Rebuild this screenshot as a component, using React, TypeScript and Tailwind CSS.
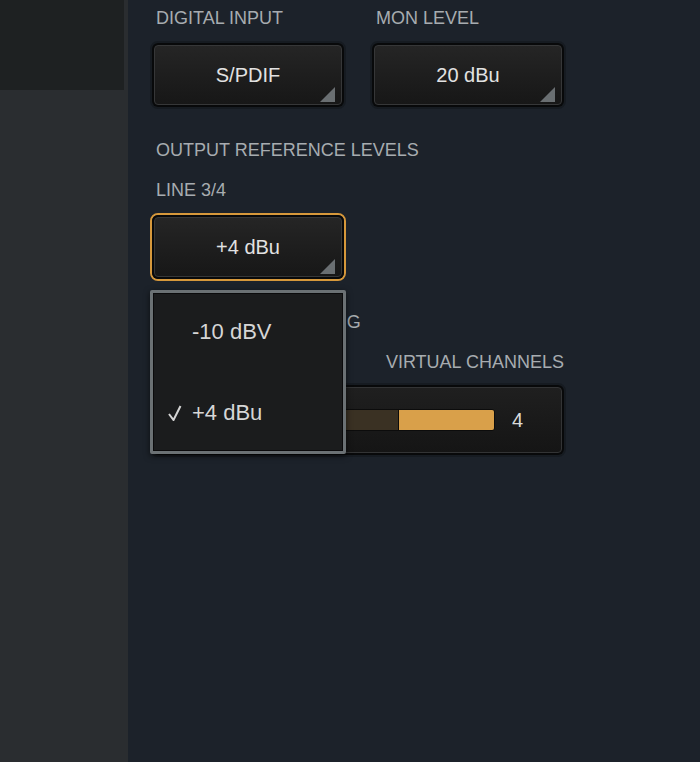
import type { ReactNode } from 'react'

function Label({ children, className = '' }: { children: ReactNode; className?: string }) {
  return (
    <div className={`h-[22px] pl-[6px] text-[18px] leading-[22px] text-[#a7acb0] uppercase whitespace-nowrap ${className}`}>
      {children}
    </div>
  )
}

function SelectButton({ value, focused = false }: { value: string; focused?: boolean }) {
  return (
    <div
      className={`w-[196px] h-[68px] rounded-[8px] border-2 ${
        focused ? 'border-[#d6983b]' : 'border-[#161b21]'
      }`}
    >
      <div className="h-full rounded-[6px] bg-[#08090a] p-[2px]">
        <div className="relative h-full rounded-[4px] border border-[#363738] bg-gradient-to-b from-[#252525] to-[#171717] flex items-center justify-center">
          <span className="text-[20px] text-[#e2e2e2] leading-none">{value}</span>
          <svg className="absolute right-[6px] bottom-[2px]" width="15" height="15" viewBox="0 0 15 15">
            <polygon points="15,0 15,15 0,15" fill="#6a6f72" />
          </svg>
        </div>
      </div>
    </div>
  )
}

function Check() {
  return (
    <svg width="14" height="16" viewBox="0 0 14 16" className="shrink-0">
      <path d="M1 9 L5.5 15 L12.5 1" fill="none" stroke="#d4d4d4" strokeWidth="2" />
    </svg>
  )
}

export default function App() {
  return (
    <div className="flex w-[700px] h-[762px] overflow-hidden" style={{ fontFamily: '"Liberation Sans", Arial, sans-serif' }}>
      <aside className="w-[128px] shrink-0 bg-[#2a2d30]">
        <div className="w-[124px] h-[90px] bg-[#1e2122]" />
      </aside>

      <main className="flex-1 bg-[#1c222a] pl-[22px] pt-[7px]">
        <div className="flex gap-[24px]">
          <div>
            <Label>Digital Input</Label>
            <div className="mt-[12px]">
              <SelectButton value="S/PDIF" />
            </div>
          </div>
          <div>
            <Label>Mon Level</Label>
            <div className="mt-[12px]">
              <SelectButton value="20 dBu" />
            </div>
          </div>
        </div>

        <Label className="mt-[30px]">Output Reference Levels</Label>
        <Label className="mt-[18px]">Line 3/4</Label>

        <div className="relative mt-[12px] w-[196px] z-10">
          <SelectButton value="+4 dBu" focused />
          {/* open menu */}
          <div className="absolute left-0 top-[77px] w-[196px] h-[164px] rounded-[2px] border-[3px] border-[#6b7174] bg-[#0b0b0c] p-px shadow-[0_2px_6px_rgba(0,0,0,0.6)]">
            <div className="h-full bg-[#1b1c1d] pt-[24px] pl-[14px] flex flex-col gap-[53px] text-[22px] leading-[28px] text-[#d6d6d6]">
              <div className="flex items-center">
                <span className="w-[24px]" />
                <span>-10 dBV</span>
              </div>
              <div className="flex items-center">
                <span className="w-[24px] flex items-center"><Check /></span>
                <span>+4 dBu</span>
              </div>
            </div>
          </div>
        </div>

        <Label className="mt-[30px]">
          <span className="ml-[3px]">UAD-2 DSP Pipelining</span>
        </Label>
        <div className="mt-[18px] flex w-[416px]">
          <Label className="flex-1">Mirror</Label>
          <Label className="pr-[2px]">Virtual Channels</Label>
        </div>

        <div className="mt-[10px] w-[416px] h-[74px] rounded-[8px] border-2 border-[#161b21]">
          <div className="h-full rounded-[6px] bg-[#08090a] p-[2px]">
            <div className="h-full rounded-[4px] border border-[#333435] bg-gradient-to-b from-[#1f1f1f] to-[#151515] flex items-center pl-[15px]">
              <div className="w-[325px] h-[22px] rounded-[3px] border border-[#0c0c0c] bg-[#3a3123] flex justify-end">
                <div className="w-[96px] h-full rounded-r-[2px] border-l border-[#0c0c0c] bg-[#d9a04a]" />
              </div>
              <span className="ml-[17px] text-[20px] leading-none text-[#dadada]">4</span>
            </div>
          </div>
        </div>
      </main>
    </div>
  )
}
